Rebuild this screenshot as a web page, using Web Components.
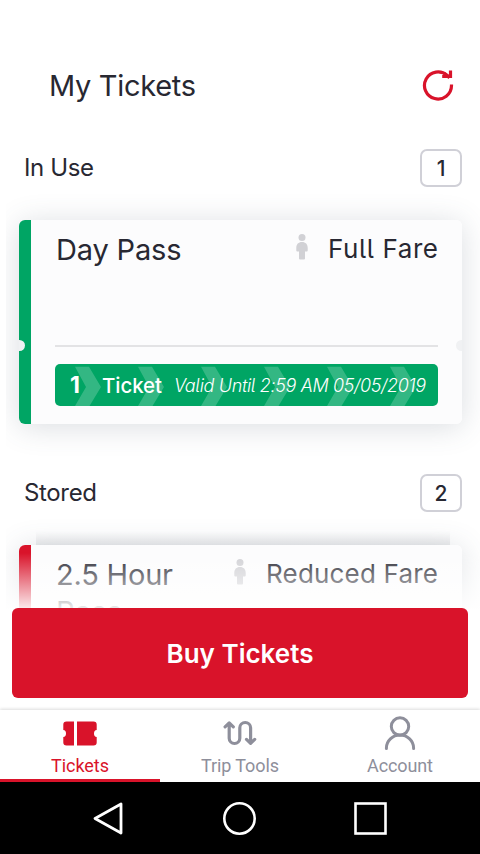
<!DOCTYPE html>
<html lang="en">
<head>
<meta charset="utf-8">
<title>My Tickets</title>
<style>
html,body{margin:0;padding:0;background:#fff}
body{width:480px;height:854px;overflow:hidden;font-family:Inter,"Liberation Sans",sans-serif;color:#282832}
</style>
</head>
<body>
<tickets-app></tickets-app>
<script>
const define = (name, html, setup) => customElements.define(name, class extends HTMLElement {
  connectedCallback() {
    if (this.shadowRoot) return;
    const t = document.createElement('template');
    t.innerHTML = html;
    this.attachShadow({mode: 'open'}).append(t.content.cloneNode(true));
    if (setup) setup(this, this.shadowRoot);
  }
});

// A single line of text whose tracking is set so that it spans the given width.
define('fit-text', `<style>
:host{display:block;white-space:nowrap;flex:none;font-feature-settings:"cv05" 1}
span{display:inline-block}
</style><span><slot></slot></span>`, (el, root) => {
  const span = root.querySelector('span');
  const target = parseFloat(el.getAttribute('width'));
  const n = el.textContent.length;
  const gap = (target - span.getBoundingClientRect().width) / Math.max(1, n - 1);
  span.style.letterSpacing = gap.toFixed(3) + 'px';
  span.style.marginRight = (-gap).toFixed(3) + 'px';
});

define('app-header', `<style>
:host{display:flex;align-items:center;justify-content:space-between;height:56px;padding:57px 26px 0 49px;font-size:29px;line-height:36px}
.t{padding-top:2px}
svg{display:block}
</style><div class="t"><slot></slot></div>
<svg width="32" height="34" viewBox="0 0 32 34" fill="none" stroke="#d9132a" stroke-width="3.2"><path d="M29.500 16.600V17.500A13.500 13.500 0 1 1 25.200 7.600L27.500 9.800"/><path d="M28.500 2.400V8.500H20.200" stroke-width="3.200"/><path d="M22.500 5.400L27.500 8.500" stroke-width="2.500"/></svg>`);

define('section-title', `<style>
:host{display:flex;align-items:center;justify-content:space-between;box-sizing:border-box;height:38px;padding:0 18px 0 23px;font-size:24px;line-height:30px}
.n{box-sizing:border-box;width:42px;height:38px;border:2px solid #d0d0d7;border-radius:7px;background:#fff;text-align:center;line-height:35px;font-size:21px;font-weight:500}
.t{margin-top:-1px}
</style><div class="t"><slot></slot></div><div class="n"></div>`, (el, root) => {
  root.querySelector('.n').textContent = el.getAttribute('count');
});

define('person-icon', `<style>:host{display:block;flex:none}svg{display:block}</style>
<svg width="12" height="26" viewBox="0 0 12 26" fill="#d1d1d5"><circle cx="6" cy="3.600" r="3.500"/><path d="M6 8C2.400 8 .3 10.300 .3 14v2.500q0 1 1 1H3v7q0 1 1 1h4q1 0 1-1v-7h1.700q1 0 1-1V14C11.700 10.300 9.600 8 6 8z"/></svg>`);

define('valid-strip', `<style>
:host{display:flex;align-items:center;position:relative;box-sizing:border-box;height:42px;border-radius:5px;background:#00a564;overflow:hidden;color:#fff;padding-left:15px}
svg{position:absolute;left:0;top:0}
.c{position:relative;display:flex;align-items:center}
</style><svg width="383" height="42"><g fill="#fff" fill-opacity=".2"></g></svg><div class="c"><slot></slot></div>`, (el, root) => {
  root.querySelector('g').innerHTML = [20, 83, 146, 209, 272, 335]
    .map(x => `<path transform="translate(${x} 0)" d="M0 2.700H14L26 23 14.500 42H0L11 23z"/>`).join('');
});

define('ticket-card', `<style>
:host{display:block;box-sizing:border-box;position:relative;height:204px;margin:0 18px 0 19px;border-radius:6px;background:linear-gradient(90deg,var(--stripe,#00a564) 12px,#fcfcfd 12px);box-shadow:0 3px 30px rgba(70,85,105,.2);padding:0 24px 0 36px}
:host([stacked])::before{content:"";position:absolute;z-index:-1;left:17px;right:12px;top:-14px;height:20px;background:linear-gradient(rgba(60,65,80,0),rgba(60,65,80,.1) 14px)}
.row{display:flex;align-items:flex-start;height:125px}
.name{font-size:29px;line-height:36px;padding:12px 0 0 1px}
.fare{display:flex;margin-left:auto;font-size:26px;line-height:32px;gap:20px}
person-icon{padding-top:14px}
.f{padding-top:13px}
hr{margin:0 0 17px;border:0;height:2px;background:#e3e3e5}
i{position:absolute;top:120px;width:6px;height:11px;background:#f0f1f3}
.l{left:0;border-radius:0 6px 6px 0}.r{right:0;border-radius:6px 0 0 6px}
</style><div class="row"><div class="name"><slot name="name"></slot></div><div class="fare"><person-icon></person-icon><div class="f"><slot name="fare"></slot></div></div></div>
<hr><slot></slot><i class="l"></i><i class="r"></i>`);

define('buy-bar', `<style>
:host{display:block;position:absolute;left:0;right:0;bottom:0;padding:55px 12px 12px;background:linear-gradient(#fff0,#ffffffe6 55px,#fff 56px)}
button{display:flex;align-items:center;justify-content:center;width:100%;height:90px;border:0;padding:2px 0 0;border-radius:6px;background:#d9132a;color:#fff;font:600 26px/32px Inter,"Liberation Sans",sans-serif}
</style><button><slot></slot></button>`);

define('tab-item', `<style>
:host{display:flex;flex:1;flex-direction:column;align-items:center;box-sizing:border-box;height:72px;color:#8e8f9b;font:18px/22px Roboto,sans-serif;border-bottom:3px solid transparent}
:host([active]){color:#d9132a;border-color:#d9132a}
.i{height:45px;display:flex;align-items:center;padding-top:0}
</style><div class="i"><slot name="icon"></slot></div><slot></slot>`);

define('tab-bar', `<style>
:host{display:flex;position:relative;background:#fff;height:72px;box-shadow:0 -1px 3px rgba(0,0,0,.14)}
svg{display:block}
</style>
<tab-item active><svg slot="icon" width="34" height="25" viewBox="0 0 34 25" fill="#d9132a" style="margin-top:1px"><path d="M3.500 .5H11V24.500H3.500Q.3 24.500 .3 21.500V16Q3 15.600 3 12.500 3 9.400 .3 9V3.500Q.3 .5 3.500 .5z"/><path d="M14 .5H30.500Q33.700 .5 33.700 3.500V9Q31 9.400 31 12.500 31 15.600 33.700 16V21.500Q33.700 24.500 30.500 24.500H14z"/></svg><fit-text width="58">Tickets</fit-text></tab-item>
<tab-item><svg slot="icon" width="36" height="28" viewBox="0 0 36 28" fill="none" stroke="#8e8f9b" stroke-width="3.200" stroke-linecap="round" stroke-linejoin="round" style="margin-top:1px"><path d="M3.100 7.800L7.200 3.900 11.300 7.800M7.200 4.500V19.200A5.200 5.200 0 0 0 17.800 19.200V8.800A5.300 5.200 0 0 1 28.600 8.800V23.500M24.500 20.400L28.600 24.300 32.700 20.400"/></svg><fit-text width="78">Trip Tools</fit-text></tab-item>
<tab-item><svg slot="icon" width="32" height="36" viewBox="0 0 32 36" fill="none" stroke="#8e8f9b" stroke-width="3" stroke-linecap="round" style="margin-top:1px"><circle cx="16" cy="11.500" r="8.700"/><path d="M2.400 33.500V33A13.600 13 0 0 1 29.600 33V33.500"/></svg><fit-text width="66">Account</fit-text></tab-item>`);

define('system-nav', `<style>
:host{display:flex;align-items:center;justify-content:center;height:72px;background:#000;gap:98px;box-sizing:border-box}
svg{display:block}
</style>
<svg width="32" height="36" viewBox="0 0 32 36" fill="none" stroke="#fff" stroke-width="2.800" stroke-linejoin="round"><path d="M29 4V33L3 18.500z"/></svg>
<svg width="34" height="36" viewBox="0 0 34 36" fill="none" stroke="#fff" stroke-width="2.600"><circle cx="17.500" cy="18.500" r="15.200"/></svg>
<svg width="34" height="36" viewBox="0 0 34 36" fill="none" stroke="#fff" stroke-width="2.600"><rect x="1.500" y="3.500" width="30" height="30"/></svg>`);

define('tickets-app', `<style>
:host{display:flex;flex-direction:column;width:480px;height:854px;overflow:hidden}
main{position:relative;flex:1;min-height:0;overflow:hidden}
.list{position:relative;z-index:0;margin-left:6px;padding-top:36px;overflow:hidden}
section-title{padding-left:18px}
ticket-card{margin-left:13px;margin-top:33px}
.second{margin-top:50px}
.wrap{padding-top:1px}
</style>
<main><app-header><fit-text width="147">My Tickets</fit-text></app-header>
<div class="list">
<section-title count="1"><fit-text width="70">In Use</fit-text></section-title>
<ticket-card><fit-text slot="name" width="125.500">Day Pass</fit-text><fit-text slot="fare" width="110">Full Fare</fit-text>
<valid-strip><fit-text width="12" style="font-size:23px;font-weight:700;width:32px">1</fit-text><fit-text width="60" style="font-size:20.500px;font-weight:500;width:72px">Ticket</fit-text><fit-text width="252" style="font-size:18px;font-style:italic;font-weight:300">Valid Until 2:59 AM 05/05/2019</fit-text></valid-strip></ticket-card>
<section-title class="second" count="2"><fit-text width="73">Stored</fit-text></section-title>
<ticket-card stacked style="--stripe:#d9132a"><div slot="name"><fit-text width="117">2.5 Hour</fit-text><fit-text class="wrap" width="66">Pass</fit-text></div><fit-text slot="fare" width="172">Reduced Fare</fit-text></ticket-card>
</div>
<buy-bar><fit-text width="147">Buy Tickets</fit-text></buy-bar></main>
<tab-bar></tab-bar><system-nav></system-nav>`);
</script>
</body>
</html>
